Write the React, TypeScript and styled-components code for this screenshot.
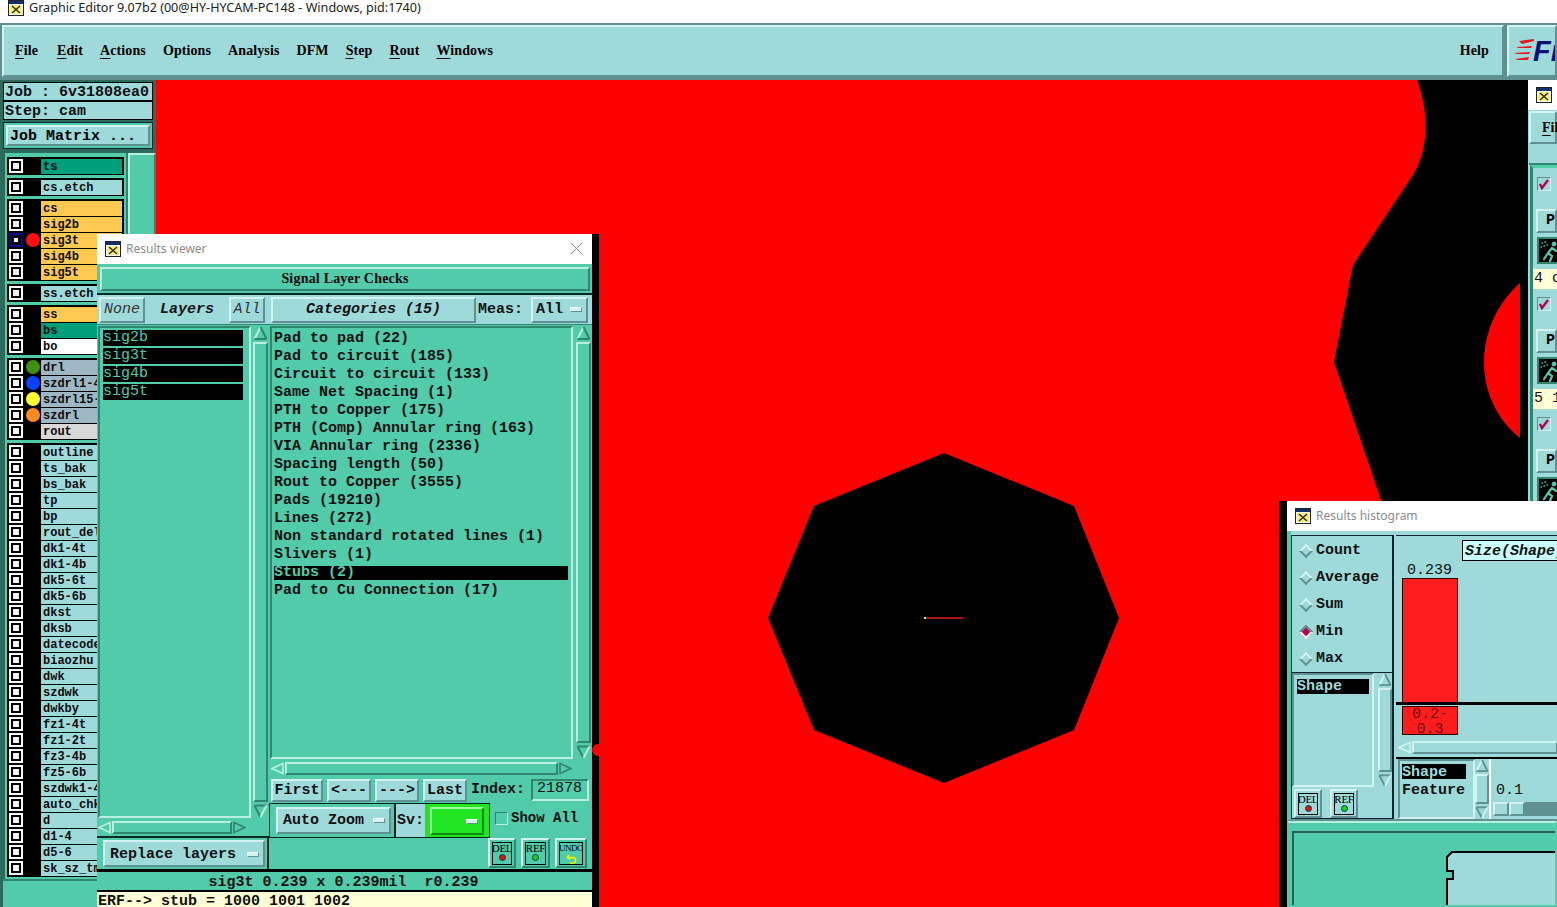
import React from "react";
import styled, { createGlobalStyle, css } from "styled-components";

const TEAL = "#9fdadb";
const GREEN = "#52cbaa";
const TL = "#d3f3f3";
const TD = "#5f9192";
const GL = "#b9f0df";
const GD = "#2f8570";
const MONO = `"Liberation Mono", "DejaVu Sans Mono", monospace`;
const SERIF = `"Liberation Serif", "Times New Roman", serif`;

const Global = createGlobalStyle`
  html, body { margin: 0; padding: 0; width: 1557px; height: 907px; overflow: hidden; background: #fff; }
  * { box-sizing: border-box; }
`;

const bevel = (l: string, d: string, w = 2) => css`
  border: ${w}px solid;
  border-color: ${l} ${d} ${d} ${l};
`;

const Page = styled.div`
  position: relative;
  width: 1557px;
  height: 907px;
  overflow: hidden;
  display: flex;
  flex-direction: column;
  background: ${TD};
`;
const AppTitle = styled.div`
  height: 23px;
  flex: none;
  background: #fff;
  display: flex;
  align-items: flex-start;
  gap: 5px;
  padding: 0 0 0 8px;
  font: 12.6px/16px "Noto Sans", sans-serif;
  color: #222;
`;
const MenuRow = styled.div`
  height: 57px;
  flex: none;
  display: flex;
  gap: 3px;
  padding: 2px 0 3px 2px;
  background: #5f8f8f;
`;
const MenuBar = styled.nav`
  flex: 1;
  ${bevel(TL, TD)}
  background: ${TEAL};
  display: flex;
  align-items: center;
  padding: 0 13px 0 11px;
  gap: 17px;
  font: bold 14px/18px ${SERIF};
  letter-spacing: 0.1px;
  color: #000;
`;
const MenuItem = styled.span<{ $wide?: boolean }>`
  white-space: nowrap;
  margin-right: ${p => (p.$wide ? 2 : 0)}px;
`;
const MenuKey = styled.span`
  text-decoration: underline;
  text-underline-offset: 3px;
`;
const HelpItem = styled.span`
  margin-left: auto;
`;
const LogoBox = styled.div`
  width: 50px;
  flex: none;
  ${bevel(TL, TD)}
  background: ${TEAL};
  display: flex;
  align-items: center;
  overflow: hidden;
  padding-left: 5px;
`;
const LogoText = styled.span`
  font: italic bold 29px/30px "Liberation Sans", sans-serif;
  color: #10107a;
  margin-left: -1px;
`;
const Main = styled.div`
  flex: 1;
  display: flex;
  min-height: 0;
`;
const Side = styled.aside`
  width: 156px;
  flex: none;
  background: #2c6a5c;
  display: flex;
  flex-direction: column;
  padding: 2px 3px 0 3px;
  position: relative;
`;
const InfoLine = styled.div`
  height: 19px;
  flex: none;
  border: 1px solid #000;
  background: ${TEAL};
  font: bold 15px/19px ${MONO};
  padding-left: 1px;
  white-space: pre;
  color: #111;
`;
const MatrixFrame = styled.div`
  margin-top: 2px;
  height: 27px;
  border: 1px solid #123;
  background: ${GREEN};
  padding: 2px;
  flex: none;
`;
const MatrixButton = styled.div`
  height: 21px;
  ${bevel(TL, TD)}
  background: ${TEAL};
  font: bold 15px/19px ${MONO};
  padding-left: 2px;
  white-space: pre;
`;
const LayerArea = styled.div`
  margin: 1px -3px 0 2px;
  flex: 1;
  display: flex;
  min-height: 0;
  border-top: 3px solid #2c6a5c;
`;
const LayerList = styled.div`
  width: 123px;
  background: ${GREEN};
  padding: 4px 2px 0 2px;
  display: flex;
  flex-direction: column;
  gap: 3px;
  border-right: 2px solid ${GD};
`;
const LayerGroup = styled.div`
  border: solid #000;
  border-width: 1px 2px;
  background: #000;
  display: flex;
  flex-direction: column;
`;
const LayerRow = styled.div`
  height: 16px;
  display: flex;
  align-items: center;
  background: #000;
`;
const Check = styled.span<{ $active?: boolean }>`
  width: 14px;
  height: 14px;
  margin: 0 3px 0 0;
  flex: none;
  padding: 2px;
  background: ${p => (p.$active ? "#0a0a8a" : "#fff")};
  display: flex;
  &::after {
    content: "";
    flex: 1;
    background: #f2f2f2;
    border: ${p => (p.$active ? 3 : 2)}px solid #000;
  }
`;
const Dot = styled.span<{ $c?: string }>`
  width: 14px;
  height: 14px;
  border-radius: 50%;
  flex: none;
  background: ${p => p.$c || "transparent"};
  margin-right: 1px;
`;
const LayerName = styled.span<{ $bg: string }>`
  flex: 1;
  height: 15px;
  background: ${p => p.$bg};
  font: bold 12px/16px ${MONO};
  padding-left: 2px;
  color: #0b0b0b;
  white-space: nowrap;
  overflow: hidden;
`;
const LayerScroll = styled.div`
  flex: 1;
  background: ${GREEN};
  ${bevel(GL, GD)}
`;
const SideFoot = styled.div`
  height: 28px;
  flex: none;
  background: ${GREEN};
  margin: 0 -3px 0 0;
  border-top: 2px solid ${GD};
`;

const Canvas = styled.div`
  flex: 1;
  position: relative;
  background: #ff0000;
  overflow: hidden;
`;
const CanvasArt = styled.svg`
  display: block;
  width: 100%;
  height: 100%;
`;

/* floating windows */
const Win = styled.section<{ $x: number; $y: number; $w: number; $h: number; $bg: string }>`
  position: absolute;
  left: ${p => p.$x}px;
  top: ${p => p.$y}px;
  width: ${p => p.$w}px;
  height: ${p => p.$h}px;
  background: ${p => p.$bg};
  display: flex;
  flex-direction: column;
  overflow: hidden;
`;
const WinTitle = styled.header`
  height: 30px;
  flex: none;
  background: #fff;
  display: flex;
  align-items: center;
  gap: 5px;
  padding: 0 0 1px 8px;
  font: 12px "Noto Sans", sans-serif;
  color: #8b8b8b;
  position: relative;
`;
const CloseX = styled.svg`
  position: absolute;
  right: 9px;
  top: 8px;
`;

const ViewerHead = styled.div`
  margin: 3px 2px 0 3px;
  height: 24px;
  flex: none;
  ${bevel(GL, GD)}
  font: bold 14px/20px ${SERIF};
  letter-spacing: 0.2px;
  text-align: center;
  color: #0a0a0a;
`;
const Columns = styled.div`
  margin-top: 2px;
  border-top: 2px solid #0a2a22;
  flex: 1;
  display: flex;
  min-height: 0;
`;
const LeftCol = styled.div`
  width: 172px;
  flex: none;
  display: flex;
  flex-direction: column;
  background: ${GREEN};
`;
const RightCol = styled.div`
  flex: 1;
  display: flex;
  flex-direction: column;
  background: ${GREEN};
  min-width: 0;
`;
const TopRow = styled.div`
  height: 30px;
  flex: none;
  display: flex;
  align-items: center;
  background: ${TEAL};
  padding: 0 4px 0 2px;
  gap: 2px;
  border-bottom: 1px solid ${GD};
`;
const Btn = styled.div<{ $w?: number; $italic?: boolean; $grow?: boolean }>`
  ${bevel(TL, TD)}
  width: ${p => (p.$w ? p.$w + "px" : "auto")};
  flex: ${p => (p.$grow ? 1 : "none")};
  height: 26px;
  background: ${TEAL};
  font: ${p => (p.$italic ? "italic" : "normal")} bold 15px/21px ${MONO};
  text-align: center;
  white-space: pre;
  color: #111;
`;
const NoneAll = styled(Btn)`
  font-weight: normal;
  color: #333;
`;
const LayersTab = styled.div`
  flex: 1;
  height: 28px;
  font: italic bold 15px/28px ${MONO};
  text-align: center;
  color: #111;
`;
const ListRow = styled.div`
  flex: 1;
  display: flex;
  min-height: 0;
  padding: 1px 1px 0 1px;
`;
const ListBox = styled.div`
  flex: 1;
  ${bevel(GD, GL)}
  padding: 2px 3px;
  display: flex;
  flex-direction: column;
  gap: 2px;
  font: 15px/16px ${MONO};
`;
const LayerPick = styled.div`
  height: 16px;
  width: 140px;
  background: #000;
  color: ${GREEN};
`;
const CatBox = styled.div`
  flex: 1;
  ${bevel(GD, GL)}
  padding: 2px 3px 0 2px;
  font: bold 15px/18px ${MONO};
  color: #111;
`;
const CatItem = styled.div<{ $on?: boolean }>`
  height: ${p => (p.$on ? 14 : 18)}px;
  margin: ${p => (p.$on ? "2px 0" : "0")};
  line-height: ${p => (p.$on ? 14 : 18)}px;
  white-space: pre;
  background: ${p => (p.$on ? "#000" : "transparent")};
  color: ${p => (p.$on ? GREEN : "#111")};
`;
const VBar = styled.div<{ $w: number; $ml?: number }>`
  width: ${p => p.$w}px;
  flex: none;
  display: flex;
  flex-direction: column;
  align-items: stretch;
  margin-left: ${p => (p.$ml === undefined ? 2 : p.$ml)}px;
  gap: 1px;
`;
const Thumb = styled.div<{ $l: string; $d: string }>`
  flex: 1;
  ${p => bevel(p.$l, p.$d)}
`;
const HBar = styled.div<{ $ml: number; $w: number }>`
  display: flex;
  flex: none;
  height: 13px;
  margin: 0 0 0 ${p => p.$ml}px;
  width: ${p => p.$w}px;
  gap: 1px;
  align-items: stretch;
`;
const Arrow = styled.svg`
  display: block;
  flex: none;
`;
const ScrollStrip = styled.div`
  height: 18px;
  padding: 3px 0 2px 0;
  flex: none;
`;
const ReplaceBlock = styled.div`
  height: 33px;
  flex: none;
  border-top: 2px solid #0a2a22;
  border-right: 2px solid #0a2a22;
  padding: 2px 2px 1px 6px;
`;
const ReplaceBtn = styled(Btn)`
  height: 27px;
  text-align: left;
  padding: 1px 0 0 5px;
  line-height: 23px;
  display: flex;
  align-items: center;
`;
const Cascade = styled.i`
  display: inline-block;
  width: 12px;
  height: 5px;
  background: ${TL};
  border: 1px solid;
  border-color: #fff ${TD} ${TD} #fff;
  margin-left: auto;
  margin-right: 4px;
`;
const MeasLabel = styled.span`
  font: bold 15px/18px ${MONO};
  color: #111;
  margin: 0 6px 0 0;
`;
const AllChoice = styled(Btn)`
  display: flex;
  align-items: center;
  padding-left: 3px;
`;
const NavRow = styled.div`
  height: 26px;
  flex: none;
  display: flex;
  align-items: center;
  padding: 0 3px 0 2px;
  gap: 4px;
`;
const NavBtn = styled(Btn)`
  height: 23px;
  line-height: 19px;
`;
const IndexLabel = styled.span`
  font: bold 15px/18px ${MONO};
  color: #111;
`;
const IndexField = styled.div`
  ${bevel(GD, GL)}
  width: 58px;
  height: 22px;
  margin-left: auto;
  font: 15px/15px ${MONO};
  padding-left: 4px;
  color: #111;
`;
const ZoomRow = styled.div`
  height: 35px;
  flex: none;
  display: flex;
  align-items: center;
`;
const ZoomGroup = styled.div`
  display: flex;
  height: 35px;
  border: 1px solid #06241c;
  width: 221px;
  background: ${GREEN};
  align-items: center;
`;
const AutoZoom = styled(Btn)`
  width: 115px;
  margin-left: 6px;
  height: 27px;
  line-height: 23px;
  display: flex;
  align-items: center;
  padding-left: 5px;
  flex: none;
`;
const SvPart = styled.div`
  margin-left: 3px;
  padding-left: 1px;
  height: 33px;
  flex: 1;
  display: flex;
  align-items: center;
  border-left: 2px solid #06241c;
  background: ${TEAL};
  font: bold 15px/18px ${MONO};
  color: #111;
`;
const SvColor = styled.div`
  flex: 1;
  height: 33px;
  margin-left: 1px;
  background: #22e622;
  padding: 3px 5px 2px 5px;
`;
const SvBtn = styled.div`
  ${bevel("#9dfb9d", "#118811")}
  height: 100%;
  display: flex;
  align-items: center;
`;
const ShowAll = styled.div`
  margin-left: 5px;
  margin-top: -5px;
  display: flex;
  align-items: center;
  gap: 3px;
  font: bold 14px/16px ${MONO};
  color: #111;
  white-space: pre;
`;
const Tick = styled.span`
  width: 13px;
  height: 13px;
  ${bevel(GD, GL, 1)}
`;
const IconRow = styled.div`
  height: 31px;
  flex: none;
  display: flex;
  justify-content: flex-end;
  gap: 5px;
  padding: 0 5px 0 0;
`;
const ToolBtn = styled.div<{ $w: number; $h: number; $l: string; $d: string }>`
  width: ${p => p.$w}px;
  height: ${p => p.$h}px;
  ${p => bevel(p.$l, p.$d)}
  padding: 2px 2px 1px;
  flex: none;
  display: flex;
`;
const ToolFace = styled.div<{ $tight?: boolean }>`
  flex: 1;
  min-width: 0;
  border: 1px solid #000;
  font: ${p => (p.$tight ? "9px" : "11px")}/10px ${SERIF};
  display: flex;
  flex-direction: column;
  align-items: center;
  letter-spacing: ${p => (p.$tight ? "-0.5px" : "-0.3px")};
  color: #000;
  overflow: hidden;
  gap: 1px;
  white-space: nowrap;
`;
const Led = styled.span<{ $c: string }>`
  width: 7px;
  height: 7px;
  border-radius: 50%;
  background: ${p => p.$c};
  border: 1px solid #044;
`;
const StatusLine = styled.div`
  height: 23px;
  flex: none;
  border-top: 3px solid #000;
  border-bottom: 2px solid #000;
  font: bold 15px/21px ${MONO};
  text-align: center;
  color: #111;
  background: ${GREEN};
  white-space: pre;
  padding-right: 2px;
`;
const ErfLine = styled.div`
  height: 15px;
  flex: none;
  background: #ffffd6;
  font: bold 15px/20px ${MONO};
  padding-left: 1px;
  color: #111;
  white-space: pre;
`;

/* histogram */
const HistBody = styled.div`
  flex: 1;
  display: flex;
  flex-direction: column;
  min-height: 0;
`;
const HistTop = styled.div`
  height: 290px;
  flex: none;
  display: flex;
  background: ${TEAL};
  border-left: 4px solid ${GREEN};
  padding-top: 4px;
  border-bottom: 2px solid ${TD};
`;
const HistLeft = styled.div`
  width: 103px;
  flex: none;
  display: flex;
  flex-direction: column;
  border: 1px solid #123;
  border-width: 1px 2px 1px 1px;
`;
const RadioList = styled.div`
  height: 137px;
  flex: none;
  padding: 2px 0 0 6px;
  border-bottom: 1px solid #123;
  display: flex;
  flex-direction: column;
`;
const Radio = styled.div`
  height: 27px;
  display: flex;
  align-items: center;
  gap: 2px;
  font: bold 15px/16px ${MONO};
  color: #111;
`;
const Diamond = styled.i<{ $on?: boolean }>`
  width: 10px;
  height: 10px;
  margin: 0 3px;
  transform: rotate(45deg);
  background: ${p => (p.$on ? "#b5004f" : TEAL)};
  border: 2px solid;
  border-color: ${p => (p.$on ? `${TD} #fff #fff ${TD}` : `${TL} ${TD} ${TD} ${TL}`)};
  flex: none;
`;
const HistListRow = styled.div`
  flex: 1;
  display: flex;
  min-height: 0;
`;
const HistList = styled.div`
  flex: 1;
  ${bevel(TD, TL)}
  padding: 4px 3px;
  font: bold 15px/16px ${MONO};
`;
const Picked = styled.div<{ $w: number }>`
  width: ${p => p.$w}px;
  height: 15px;
  background: #000;
  color: ${TEAL};
`;
const PlainItem = styled.div`
  height: 15px;
  margin-top: 3px;
  color: #111;
`;
const HistButtons = styled.div`
  height: 31px;
  flex: none;
  display: flex;
  gap: 8px;
  padding: 2px 0 0 2px;
`;
const HistRight = styled.div`
  flex: 1;
  display: flex;
  flex-direction: column;
  min-width: 0;
  margin-left: 2px;
`;
const Chart = styled.div`
  height: 170px;
  flex: none;
  padding: 4px 0 0 6px;
  border-top: 1px solid #123;
  border-bottom: 3px solid #000;
  position: relative;
`;
const AxisTitle = styled.div`
  position: absolute;
  left: 66px;
  top: 4px;
  width: 120px;
  height: 21px;
  border: 1px solid #000;
  background: #c9ffff;
  font: italic bold 15px/21px ${MONO};
  padding-left: 2px;
  white-space: nowrap;
  overflow: hidden;
  color: #111;
`;
const BarColumn = styled.div`
  height: 100%;
  width: 56px;
  display: flex;
  flex-direction: column;
`;
const BarValue = styled.div`
  margin-top: 23px;
  height: 15px;
  font: 15px/16px ${MONO};
  margin-left: 5px;
  color: #111;
`;
const Bar = styled.div`
  flex: 1;
  background: #ff1c1c;
  border: 1px solid #300;
  border-bottom: 0;
`;
const BarLabelRow = styled.div`
  height: 36px;
  flex: none;
  padding: 1px 0 0 6px;
`;
const BarLabel = styled.div`
  width: 56px;
  height: 29px;
  background: #ff1c1c;
  border: 1px solid #300;
  font: 15px/15px ${MONO};
  color: #611;
  text-align: center;
  overflow: hidden;
`;
const HistBottom = styled.div`
  flex: 1;
  display: flex;
  border-top: 2px solid #000;
  margin-top: 3px;
  min-height: 0;
`;
const FieldList = styled.div`
  width: 77px;
  flex: none;
  ${bevel(TD, TL)}
  padding: 3px 2px;
  margin-left: 2px;
  font: bold 15px/17px ${MONO};
`;
const SliderZone = styled.div`
  flex: 1;
  background: ${TEAL};
  border-left: 2px solid #fff;
  padding: 24px 0 0 2px;
  font: 15px/16px ${MONO};
  color: #111;
`;
const SliderValue = styled.div`
  margin-left: 3px;
`;
const Slider = styled.div`
  margin-top: 3px;
  height: 14px;
  background: ${TD};
  display: flex;
`;
const SliderKnob = styled.div`
  width: 16px;
  ${bevel(TL, TD)}
  background: ${TEAL};
`;
const HistGreen = styled.div`
  flex: 1;
  background: ${GREEN};
  border: 2px solid ${GREEN};
  border-top: 2px solid ${GL};
  padding: 8px 0 0 3px;
  min-height: 0;
`;
const BoardFrame = styled.div`
  height: 100%;
  border: 2px solid #2a5f55;
  border-bottom: 0;
  border-right: 0;
  overflow: hidden;
`;
const Board = styled.svg`
  display: block;
`;

/* right window */
const SideBtn = styled.div`
  height: 33px;
  flex: none;
  ${bevel(TL, TD)}
  margin: 1px 0 0 1px;
  background: ${TEAL};
  font: bold 14px/29px ${SERIF};
  padding-left: 11px;
  white-space: nowrap;
`;
const SideBand = styled.div`
  height: 21px;
  margin-left: 1px;
  flex: none;
  background: ${TEAL};
  border-bottom: 2px solid ${GD};
`;
const SidePanels = styled.div`
  flex: 1;
  margin-left: 2px;
  border-left: 3px solid ${GD};
  padding-top: 8px;
  display: flex;
  flex-direction: column;
  border-top: 3px solid ${GREEN};
  background: ${TEAL};
`;
const CheckRow = styled.div<{ $gap?: number }>`
  height: 26px;
  margin-top: ${p => p.$gap || 0}px;
  padding: 1px 0 0 4px;
  flex: none;
`;
const TickBox = styled.div`
  width: 14px;
  height: 14px;
  ${bevel(TD, TL, 1)}
  display: flex;
`;
const PBtn = styled.div`
  margin: 7px 0 0 3px;
  height: 24px;
  flex: none;
  ${bevel(TL, TD)}
  font: bold 15px/20px ${MONO};
  padding-left: 8px;
  white-space: nowrap;
`;
const RunBtn = styled.div`
  margin: 4px 0 0 4px;
  width: 27px;
  height: 27px;
  flex: none;
  background: #000;
  border: 2px solid ${GD};
`;
const YellowBar = styled.div`
  height: 20px;
  flex: none;
  margin-top: 5px;
  background: #ffffd6;
  font: 15px/19px ${MONO};
  padding-left: 1px;
  white-space: nowrap;
  color: #111;
`;

const WinIcon = () => (
  <svg width="16" height="16" viewBox="0 0 16 16" style={{ flex: "none" }}>
    <rect x="0.5" y="0.5" width="15" height="15" fill="#fff" stroke="#222" />
    <rect x="1" y="1" width="14" height="3" fill="#123070" />
    <rect x="2" y="5" width="12" height="9" fill="#f6ee70" />
    <path d="M4 6l8 7M12 6l-8 7" stroke="#222" strokeWidth="1.3" />
  </svg>
);

const UpArrow = ({ l, d, s = 15, down = false }: { l: string; d: string; s?: number; down?: boolean }) => (
  <Arrow width={s} height={s} viewBox="0 0 15 15">
    {down ? (
      <>
        <path d="M1.5 2.5H13.5" stroke={d} strokeWidth="2" fill="none" />
        <path d="M1.5 2.5L7.5 14" stroke={d} strokeWidth="2" fill="none" />
        <path d="M13.5 2.5L7.5 14" stroke={l} strokeWidth="2" fill="none" />
      </>
    ) : (
      <>
        <path d="M7.5 1L1.5 13" stroke={l} strokeWidth="2" fill="none" />
        <path d="M7.5 1L13.5 13M1.5 13H13.5" stroke={d} strokeWidth="2" fill="none" />
      </>
    )}
  </Arrow>
);
const SideArrow = ({ l, d, right = false }: { l: string; d: string; right?: boolean }) => (
  <Arrow width="13" height="13" viewBox="0 0 13 13">
    {right ? (
      <path d="M1 1.5L12 6.5L1 11.5Z" stroke={d} strokeWidth="1.6" fill="none" />
    ) : (
      <path d="M12 1.5L1 6.5L12 11.5Z" stroke={l} strokeWidth="1.6" fill="none" />
    )}
  </Arrow>
);

const Runner = () => (
  <svg width="23" height="23" viewBox="0 0 23 23">
    <g stroke={GREEN} fill="none" strokeLinecap="round">
      <circle cx="15" cy="5" r="2" fill={GREEN} />
      <path d="M13 9l-4 5 4 3-2 5M13 9l4 3h4M9 14l-4 6" strokeWidth="2.2" />
      <path d="M3 4h.5M6 3h.5M2 8h.5M5 7h.5M8 6h.5" strokeWidth="1.5" />
    </g>
  </svg>
);
const CheckMark = () => (
  <svg width="12" height="12" viewBox="0 0 12 12">
    <path d="M2 6l2 4L10 2" stroke="#b5004f" strokeWidth="2.4" fill="none" />
  </svg>
);

type Row = { n: string; c: string; d?: string; a?: boolean };
const T = TEAL, O = "#ffc850", G = "#9db8c4";
const groups: Row[][] = [
  [{ n: "ts", c: "#00a07c" }],
  [{ n: "cs.etch", c: T }],
  [{ n: "cs", c: O }, { n: "sig2b", c: O }, { n: "sig3t", c: O, d: "#ff1010", a: true }, { n: "sig4b", c: O }, { n: "sig5t", c: O }],
  [{ n: "ss.etch", c: T }],
  [{ n: "ss", c: O }, { n: "bs", c: "#00a07c" }, { n: "bo", c: "#fff" }],
  [{ n: "drl", c: G, d: "#3f9010" }, { n: "szdrl1-4", c: G, d: "#1040ff" }, { n: "szdrl15-6", c: G, d: "#ffff30" }, { n: "szdrl", c: G, d: "#ff8a20" }, { n: "rout", c: "#d8d8d8" }],
  "outline ts_bak bs_bak tp bp rout_del dk1-4t dk1-4b dk5-6t dk5-6b dkst dksb datecode biaozhu dwk szdwk dwkby fz1-4t fz1-2t fz3-4b fz5-6b szdwk1-4 auto_chk d d1-4 d5-6 sk_sz_tm".split(" ").map(n => ({ n, c: T })),
];
const cats = ["Pad to pad (22)", "Pad to circuit (185)", "Circuit to circuit (133)", "Same Net Spacing (1)", "PTH to Copper (175)", "PTH (Comp) Annular ring (163)", "VIA Annular ring (2336)", "Spacing length (50)", "Rout to Copper (3555)", "Pads (19210)", "Lines (272)", "Non standard rotated lines (1)", "Slivers (1)", "Stubs (2)", "Pad to Cu Connection (17)"];
const menus: { t: string; key: boolean }[] = [
  { t: "File", key: true }, { t: "Edit", key: true }, { t: "Actions", key: true }, { t: "Options", key: false },
  { t: "Analysis", key: false }, { t: "DFM", key: false }, { t: "Step", key: true }, { t: "Rout", key: true }, { t: "Windows", key: true },
];

const Tool = ({ t, c, l, d, w, h, undo }: { t: string; c?: string; l: string; d: string; w: number; h: number; undo?: boolean }) => (
  <ToolBtn $w={w} $h={h} $l={l} $d={d}>
    <ToolFace $tight={undo}>
      {t}
      {undo ? (
        <svg width="12" height="11" viewBox="0 0 12 11"><path d="M3 4h5a2.5 2.5 0 0 1 0 6H5M4 1L2 4l3 2" stroke="#ee0" strokeWidth="1.8" fill="none" /></svg>
      ) : (
        <Led $c={c as string} />
      )}
    </ToolFace>
  </ToolBtn>
);

export default function App() {
  return (
    <Page>
      <Global />
      <AppTitle>
        <WinIcon />
        <span>Graphic Editor 9.07b2 (00@HY-HYCAM-PC148 - Windows, pid:1740)</span>
      </AppTitle>
      <MenuRow>
        <MenuBar>
          {menus.map(m => (
            <MenuItem key={m.t} $wide={m.t === "File"}>
              {m.key ? <MenuKey>{m.t[0]}</MenuKey> : m.t[0]}
              {m.t.slice(1)}
            </MenuItem>
          ))}
          <HelpItem>Help</HelpItem>
        </MenuBar>
        <LogoBox>
          <svg width="20" height="24" viewBox="0 0 20 24" style={{ flex: "none" }}>
            <g fill="#e8141c">
              <path d="M5 2L20 0v2L8 5z" />
              <path d="M2 8l16-1-1 2H5z" />
              <path d="M0 14l16-1-1 2H3z" />
              <path d="M1 20l14-2-1 3H4z" />
            </g>
          </svg>
          <LogoText>Fr</LogoText>
        </LogoBox>
      </MenuRow>
      <Main>
        <Side>
          <InfoLine>Job : 6v31808ea0</InfoLine>
          <InfoLine>Step: cam</InfoLine>
          <MatrixFrame><MatrixButton>Job Matrix ...</MatrixButton></MatrixFrame>
          <LayerArea>
            <LayerList>
              {groups.map((g, i) => (
                <LayerGroup key={i}>
                  {g.map(r => (
                    <LayerRow key={r.n}>
                      <Check $active={r.a} />
                      <Dot $c={r.d} />
                      <LayerName $bg={r.c}>{r.n}</LayerName>
                    </LayerRow>
                  ))}
                </LayerGroup>
              ))}
            </LayerList>
            <LayerScroll />
          </LayerArea>
          <SideFoot />
        </Side>
        <Canvas>
          <CanvasArt viewBox="156 80 1401 827" preserveAspectRatio="none">
            <rect x="156" y="80" width="1401" height="827" fill="#ff0000" />
            <path d="M1417 80C1430 115 1428 150 1413 175L1353 265L1334 362L1381 500L1500 907H1557V80Z" fill="#000" />
            <path d="M1520 283C1495 305 1484 335 1484 362C1484 390 1495 418 1520 438Z" fill="#ff0000" />
            <polygon points="944,453 1074,506 1119,618 1074,730 944,783 814,730 768,618 814,506" fill="#000" />
            <rect x="926" y="617" width="37" height="2" fill="#b01010" />
            <rect x="924" y="617" width="2" height="2" fill="#7fe" />
            <rect x="592" y="234" width="7" height="673" fill="#000" />
            <circle cx="598" cy="750" r="6" fill="#ff0000" />
            <rect x="1279" y="501" width="10" height="406" fill="#000" />
          </CanvasArt>
        </Canvas>
      </Main>

      <Win $x={97} $y={234} $w={495} $h={673} $bg={GREEN}>
        <WinTitle>
          <WinIcon />
          <span>Results viewer</span>
          <CloseX width="13" height="13" viewBox="0 0 13 13"><path d="M1 1l11 11M12 1L1 12" stroke="#888" /></CloseX>
        </WinTitle>
        <ViewerHead>Signal Layer Checks</ViewerHead>
        <Columns>
          <LeftCol>
            <TopRow>
              <NoneAll $w={46} $italic>None</NoneAll>
              <LayersTab>Layers</LayersTab>
              <NoneAll $w={36} $italic>All</NoneAll>
            </TopRow>
            <ListRow>
              <ListBox>
                <LayerPick>sig2b</LayerPick>
                <LayerPick>sig3t</LayerPick>
                <LayerPick>sig4b</LayerPick>
                <LayerPick>sig5t</LayerPick>
              </ListBox>
              <VBar $w={15}>
                <UpArrow l={GL} d={GD} />
                <Thumb $l={GL} $d={GD} />
                <UpArrow l={GL} d={GD} down />
              </VBar>
            </ListRow>
            <ScrollStrip>
              <HBar $ml={1} $w={148}>
                <SideArrow l={GL} d={GD} />
                <Thumb $l={GL} $d={GD} />
                <SideArrow l={GL} d={GD} right />
              </HBar>
            </ScrollStrip>
            <ReplaceBlock>
              <ReplaceBtn>Replace layers<Cascade /></ReplaceBtn>
            </ReplaceBlock>
          </LeftCol>
          <RightCol>
            <TopRow>
              <Btn $w={205} $italic>Categories (15)</Btn>
              <MeasLabel>Meas:</MeasLabel>
              <AllChoice $grow>All<Cascade /></AllChoice>
            </TopRow>
            <ListRow>
              <CatBox>
                {cats.map(c => <CatItem key={c} $on={c.startsWith("Stubs")}>{c}</CatItem>)}
              </CatBox>
              <VBar $w={15} $ml={3}>
                <UpArrow l={GL} d={GD} />
                <Thumb $l={GL} $d={GD} />
                <UpArrow l={GL} d={GD} down />
              </VBar>
            </ListRow>
            <ScrollStrip>
              <HBar $ml={2} $w={301}>
                <SideArrow l={GL} d={GD} />
                <Thumb $l={GL} $d={GD} />
                <SideArrow l={GL} d={GD} right />
              </HBar>
            </ScrollStrip>
            <NavRow>
              <NavBtn $w={52}>First</NavBtn>
              <NavBtn $w={44}>{"<---"}</NavBtn>
              <NavBtn $w={44}>{"--->"}</NavBtn>
              <NavBtn $w={44}>Last</NavBtn>
              <IndexLabel>Index:</IndexLabel>
              <IndexField>21878</IndexField>
            </NavRow>
            <ZoomRow>
              <ZoomGroup>
                <AutoZoom>Auto Zoom<Cascade /></AutoZoom>
                <SvPart>
                  Sv:
                  <SvColor><SvBtn><Cascade /></SvBtn></SvColor>
                </SvPart>
              </ZoomGroup>
              <ShowAll><Tick />Show All</ShowAll>
            </ZoomRow>
            <IconRow>
              <Tool t="DEL" c="#e01010" l={TL} d={GD} w={28} h={30} />
              <Tool t="REF" c="#20d020" l={TL} d={GD} w={29} h={30} />
              <Tool t="UNDO" l={TL} d={GD} w={32} h={30} undo />
            </IconRow>
          </RightCol>
        </Columns>
        <StatusLine>sig3t 0.239 x 0.239mil  r0.239</StatusLine>
        <ErfLine>ERF--&gt; stub = 1000 1001 1002</ErfLine>
      </Win>

      <Win $x={1287} $y={501} $w={270} $h={406} $bg={TEAL}>
        <WinTitle>
          <WinIcon />
          <span>Results histogram</span>
        </WinTitle>
        <HistBody>
          <HistTop>
            <HistLeft>
              <RadioList>
                <Radio><Diamond />Count</Radio>
                <Radio><Diamond />Average</Radio>
                <Radio><Diamond />Sum</Radio>
                <Radio><Diamond $on />Min</Radio>
                <Radio><Diamond />Max</Radio>
              </RadioList>
              <HistListRow>
                <HistList><Picked $w={72}>Shape</Picked></HistList>
                <VBar $w={14} $ml={4}>
                  <UpArrow l={TL} d={TD} s={14} />
                  <Thumb $l={TL} $d={TD} />
                  <UpArrow l={TL} d={TD} s={14} down />
                </VBar>
              </HistListRow>
              <HistButtons>
                <Tool t="DEL" c="#e01010" l={TL} d={TD} w={28} h={29} />
                <Tool t="REF" c="#20d020" l={TL} d={TD} w={28} h={29} />
              </HistButtons>
            </HistLeft>
            <HistRight>
              <Chart>
                <AxisTitle>Size(Shape)</AxisTitle>
                <BarColumn>
                  <BarValue>0.239</BarValue>
                  <Bar />
                </BarColumn>
              </Chart>
              <BarLabelRow>
                <BarLabel>0.2-<br />0.3</BarLabel>
              </BarLabelRow>
              <HBar $ml={2} $w={160}>
                <SideArrow l={TL} d={TD} />
                <Thumb $l={TL} $d={TD} />
              </HBar>
              <HistBottom>
                <FieldList>
                  <Picked $w={64}>Shape</Picked>
                  <PlainItem>Feature</PlainItem>
                </FieldList>
                <VBar $w={14} $ml={0}>
                  <UpArrow l={TL} d={TD} s={14} />
                  <Thumb $l={TL} $d={TD} />
                  <UpArrow l={TL} d={TD} s={14} down />
                </VBar>
                <SliderZone>
                  <SliderValue>0.1</SliderValue>
                  <Slider><SliderKnob /><SliderKnob /></Slider>
                </SliderZone>
              </HistBottom>
            </HistRight>
          </HistTop>
          <HistGreen>
            <BoardFrame>
              <Board width="270" height="80" viewBox="0 0 270 80">
                <path d="M270 19H158L153 24V38H159V46H153V80H270Z" fill={TEAL} stroke="#000" strokeWidth="2" />
              </Board>
            </BoardFrame>
          </HistGreen>
        </HistBody>
      </Win>

      <Win $x={1528} $y={80} $w={29} $h={421} $bg={TEAL}>
        <WinTitle><WinIcon /></WinTitle>
        <SideBtn><MenuKey>F</MenuKey>ile</SideBtn>
        <SideBand />
        <SidePanels>
          <CheckRow><TickBox><CheckMark /></TickBox></CheckRow>
          <PBtn>P:</PBtn>
          <RunBtn><Runner /></RunBtn>
          <YellowBar>4 c</YellowBar>
          <CheckRow $gap={7}><TickBox><CheckMark /></TickBox></CheckRow>
          <PBtn>P:</PBtn>
          <RunBtn><Runner /></RunBtn>
          <YellowBar>5 1</YellowBar>
          <CheckRow $gap={7}><TickBox><CheckMark /></TickBox></CheckRow>
          <PBtn>P:</PBtn>
          <RunBtn><Runner /></RunBtn>
        </SidePanels>
      </Win>
    </Page>
  );
}
